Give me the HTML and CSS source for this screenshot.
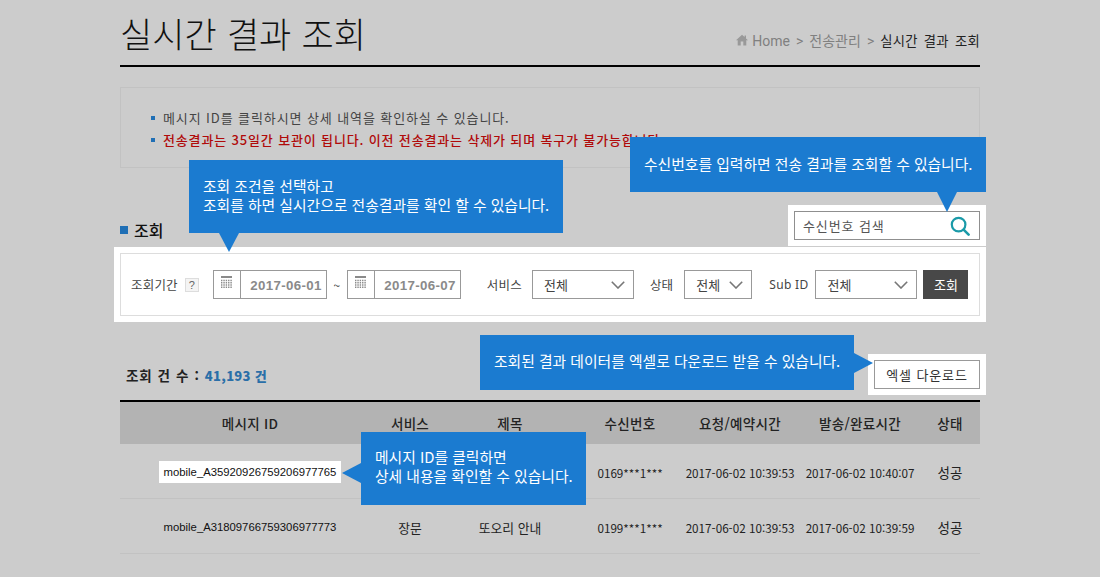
FILE: index.html
```html
<!DOCTYPE html>
<html lang="ko">
<head>
<meta charset="utf-8">
<title>실시간 결과 조회</title>
<link rel="stylesheet" href="styles.css">
</head>
<body>
<div class="wrap">
  <header class="top">
    <h1>실시간 결과 조회</h1>
    <nav class="crumb">
      <svg class="home" viewBox="0 0 12 12" width="12" height="12"><path d="M6 .8 0 6.2h1.7V11.4h3V7.6h2.6v3.8h3V6.2H12L10 4.4V1.4H8.6v1.7z" fill="#999"/></svg>
      <span>Home</span><span class="sep">&gt;</span><span>전송관리</span><span class="sep">&gt;</span><span class="cur">실시간 결과 조회</span>
    </nav>
  </header>

  <ul class="notice">
    <li>메시지 ID를 클릭하시면 상세 내역을 확인하실 수 있습니다.</li>
    <li class="warn">전송결과는 35일간 보관이 됩니다. 이전 전송결과는 삭제가 되며 복구가 불가능합니다.</li>
  </ul>

  <div class="headrow">
    <h2>조회</h2>
    <div class="search">
      <span>수신번호 검색</span>
      <svg viewBox="0 0 20 20" width="20" height="20"><circle cx="8.6" cy="8.6" r="6.8" fill="none" stroke="#1a9aa8" stroke-width="2.2"/><path d="M13.6 13.6 18.6 18.6" stroke="#1a9aa8" stroke-width="2.6" stroke-linecap="round"/></svg>
    </div>
  </div>

  <div class="filter">
    <span class="lbl">조회기간</span>
    <span class="help">?</span>
    <div class="date first">
      <span class="cal"><svg viewBox="0 0 11 13" width="11" height="13"><path d="M0 1h11" stroke="#8a8a8a" stroke-width="2"/><path d="M0 4.5h11M0 6.75h11M0 9h11M0 11.25h11" stroke="#8a8a8a" stroke-width="1.5" stroke-dasharray="1.4 .95"/></svg></span>
      <span class="val">2017-06-01</span>
    </div>
    <span class="tilde">~</span>
    <div class="date">
      <span class="cal"><svg viewBox="0 0 11 13" width="11" height="13"><path d="M0 1h11" stroke="#8a8a8a" stroke-width="2"/><path d="M0 4.5h11M0 6.75h11M0 9h11M0 11.25h11" stroke="#8a8a8a" stroke-width="1.5" stroke-dasharray="1.4 .95"/></svg></span>
      <span class="val">2017-06-07</span>
    </div>
    <span class="lbl svc">서비스</span>
    <div class="sel w102"><span>전체</span><svg viewBox="0 0 14 8" width="14" height="8"><path d="M.8.8 7 7 13.2.8" fill="none" stroke="#777" stroke-width="1.6"/></svg></div>
    <span class="lbl st">상태</span>
    <div class="sel w68"><span>전체</span><svg viewBox="0 0 14 8" width="14" height="8"><path d="M.8.8 7 7 13.2.8" fill="none" stroke="#777" stroke-width="1.6"/></svg></div>
    <span class="lbl sub">Sub ID</span>
    <div class="sel w102"><span>전체</span><svg viewBox="0 0 14 8" width="14" height="8"><path d="M.8.8 7 7 13.2.8" fill="none" stroke="#777" stroke-width="1.6"/></svg></div>
    <button class="go">조회</button>
  </div>

  <div class="countrow">
    <p class="count">조회 건 수 : <b>41,193 건</b></p>
    <button class="xls">엑셀 다운로드</button>
  </div>

  <table class="grid">
    <colgroup><col class="c1"><col class="c2"><col class="c3"><col class="c4"><col class="c5"><col class="c5"><col class="c2"></colgroup>
    <thead>
      <tr><th>메시지 ID</th><th>서비스</th><th>제목</th><th>수신번호</th><th>요청/예약시간</th><th>발송/완료시간</th><th>상태</th></tr>
    </thead>
    <tbody>
      <tr><td><a class="mid lit">mobile_A35920926759206977765</a></td><td>장문</td><td>또오리 안내</td><td class="num">0169***1***</td><td class="num">2017-06-02 10:39:53</td><td class="num">2017-06-02 10:40:07</td><td class="ok">성공</td></tr>
      <tr><td><a class="mid">mobile_A31809766759306977773</a></td><td>장문</td><td>또오리 안내</td><td class="num">0199***1***</td><td class="num">2017-06-02 10:39:53</td><td class="num">2017-06-02 10:39:59</td><td class="ok">성공</td></tr>
    </tbody>
  </table>

  <div class="tip tip-a">조회 조건을 선택하고<br>조회를 하면 실시간으로 전송결과를 확인 할 수 있습니다.</div>
  <div class="tip tip-b">수신번호를 입력하면 전송 결과를 조회할 수 있습니다.</div>
  <div class="tip tip-c">조회된 결과 데이터를 엑셀로 다운로드 받을 수 있습니다.</div>
  <div class="tip tip-d">메시지 ID를 클릭하면<br>상세 내용을 확인할 수 있습니다.</div>
</div>
</body>
</html>
```

FILE: styles.css
```css
* { box-sizing: border-box; }
html, body { margin: 0; padding: 0; }
body {
  background: #cccccc;
  color: #222;
  font-family: "Noto Sans CJK KR", "Liberation Sans", sans-serif;
  font-size: 12.5px;
  height: 577px;
  overflow: hidden;
}
.wrap { position: relative; width: 860px; margin: 0 auto; }

.top {
  height: 67px;
  border-bottom: 2px solid #000;
  display: flex;
  justify-content: space-between;
  align-items: flex-end;
}
h1 {
  margin: 0 0 7px;
  font-size: 35px;
  font-weight: 300;
  line-height: 50px;
  word-spacing: 0.5px;
  color: #111;
}
.crumb {
  display: flex;
  align-items: center;
  margin-bottom: 14px;
  font-size: 14px;
  line-height: 20px;
  color: #808080;
  font-family: "Roboto", "Noto Sans CJK KR", sans-serif;
}
.home { margin-right: 4px; margin-top: -3px; }
.sep { margin: 0 6px; }
.cur { color: #222; font-family: "Noto Sans CJK KR", sans-serif; font-size: 13.3px; letter-spacing: 0.3px; word-spacing: 2px; }

.notice {
  margin: 20px 0 0;
  height: 81px;
  border: 1px solid #c2c2c2;
  padding: 19px 0 0 30px;
  list-style: none;
  font-size: 13px;
  line-height: 22px;
  color: #444;
}
.notice li { position: relative; padding-left: 12px; letter-spacing: 0.9px; }
.notice li::before {
  content: "";
  position: absolute;
  left: 0;
  top: 9px;
  width: 4px;
  height: 4px;
  background: #1f6fb5;
}
.notice .warn { color: #b00a0a; font-weight: 500; letter-spacing: 0.85px; }

.headrow {
  margin-top: 43px;
  display: flex;
  justify-content: space-between;
  align-items: flex-end;
}
h2 {
  display: flex;
  align-items: center;
  margin: 0 0 -2px;
  font-size: 16px;
  font-weight: 500;
  line-height: 24px;
  color: #111;
}
h2::before {
  content: "";
  width: 8px;
  height: 8px;
  margin-right: 6px;
  background: #1f6fb5;
}
.search {
  width: 186px;
  height: 29px;
  border: 1px solid #8f8f8f;
  background: #fff;
  box-shadow: 0 0 0 6px #fff;
  display: flex;
  align-items: center;
  justify-content: space-between;
  padding: 0 9px 0 8px;
  font-size: 13px;
  letter-spacing: 0.9px;
  color: #555;
}

.filter {
  margin-top: 13px;
  height: 63px;
  border: 1px solid #ddd;
  background: #fff;
  box-shadow: 0 0 0 6px #fff;
  display: flex;
  align-items: center;
  padding: 0 0 0 10px;
  color: #444;
}
.lbl { line-height: 29px; letter-spacing: 0.2px; }
.help {
  width: 14px;
  height: 14px;
  margin-left: 7px;
  border: 1px solid #ddd;
  background: #f4f4f4;
  font-family: "Liberation Sans", sans-serif;
  font-size: 11px;
  line-height: 12px;
  text-align: center;
  color: #666;
}
.date {
  display: flex;
  width: 114px;
  height: 29px;
  border: 1px solid #999;
}
.date.first { margin-left: 14px; }
.cal {
  width: 27px;
  border-right: 1px solid #999;
  display: flex;
  align-items: center;
  justify-content: center;
  padding-bottom: 4px;
}
.val {
  flex: 1;
  font-family: "Liberation Sans", sans-serif;
  font-size: 13.3px;
  font-weight: 700;
  line-height: 29px;
  letter-spacing: 0.35px;
  text-align: right;
  padding-right: 4px;
  color: #8a8a8a;
}
.tilde { width: 20px; text-align: center; font-size: 12px; }
.svc { margin-left: 26px; margin-right: 10px; }
.st { margin-left: 16px; margin-right: 11px; }
.sub { margin-left: 17px; margin-right: 7px; font-family: "Noto Sans", sans-serif; font-size: 12px; letter-spacing: 0.3px; }
.sel {
  height: 29px;
  border: 1px solid #999;
  display: flex;
  align-items: center;
  justify-content: space-between;
  padding: 0 8px 0 11px;
  font-size: 13px;
  color: #444;
}
.w102 { width: 102px; }
.w68 { width: 68px; }
.go {
  width: 45px;
  height: 29px;
  margin-left: 6px;
  border: 0;
  padding: 0;
  background: #484848;
  color: #fff;
  font: inherit;
  font-size: 13px;
}

.countrow {
  margin-top: 44px;
  display: flex;
  justify-content: space-between;
  align-items: center;
  padding-left: 6px;
}
.count { margin: 0; font-size: 13.5px; font-weight: 700; letter-spacing: 0.8px; word-spacing: 0.6px; color: #222; }
.count b { color: #2a6fa8; font-size: 13px; letter-spacing: 0.3px; word-spacing: 0; }
.xls {
  width: 106px;
  height: 29px;
  border: 1px solid #999;
  padding: 0;
  background: #fff;
  box-shadow: 0 0 0 6px #fff;
  font: inherit;
  font-size: 13px;
  letter-spacing: 0.9px;
  color: #333;
}

.grid {
  width: 860px;
  margin-top: 11px;
  border-collapse: separate;
  border-spacing: 0;
  table-layout: fixed;
  border-top: 2px solid #000;
}
.c1 { width: 260px; }
.c2 { width: 60px; }
.c3 { width: 140px; }
.c4 { width: 100px; }
.c5 { width: 120px; }
.grid th {
  height: 42px;
  padding: 0;
  background: #b3b3b3;
  font-size: 13.5px;
  font-weight: 500;
  letter-spacing: 0.3px;
  color: #222;
}
.grid td {
  height: 55px;
  padding: 2px 0 0;
  border-bottom: 1px solid #c2c2c2;
  text-align: center;
  font-size: 12.8px;
  color: #222;
  white-space: nowrap;
}
.grid td.num { font-size: 11.7px; }
.grid td.ok { font-size: 13.5px; }
.mid { font-family: "Liberation Sans", sans-serif; font-size: 11.3px; padding: 4px 5px; display: inline-block; line-height: 14px; color: #111; }
.lit { background: #fff; }

.tip {
  position: absolute;
  background: #1b7bd0;
  color: #fff;
  font-size: 14.8px;
  line-height: 18.5px;
  white-space: nowrap;
}
.tip::after { content: ""; position: absolute; width: 0; height: 0; border-style: solid; border-color: transparent; }
.tip-a { left: 69px; top: 160px; width: 374px; height: 73px; padding: 17px 0 0 14px; }
.tip-a::after { left: 30px; top: 73px; border-width: 19px 10px 0; border-top-color: #1b7bd0; }
.tip-b { left: 510px; top: 137px; width: 356px; height: 55px; padding: 18px 0 0 14px; }
.tip-b::after { left: 307px; top: 55px; border-width: 20px 10px 0; border-top-color: #1b7bd0; }
.tip-c { left: 360px; top: 335px; width: 374px; height: 55px; padding: 17px 0 0 14px; }
.tip-c::after { left: 374px; top: 18px; border-width: 10px 0 10px 19px; border-left-color: #1b7bd0; }
.tip-d { left: 241px; top: 432px; width: 225px; height: 73px; padding: 16px 0 0 14px; }
.tip-d::after { left: -19px; top: 31px; border-width: 10px 19px 10px 0; border-right-color: #1b7bd0; }
```
